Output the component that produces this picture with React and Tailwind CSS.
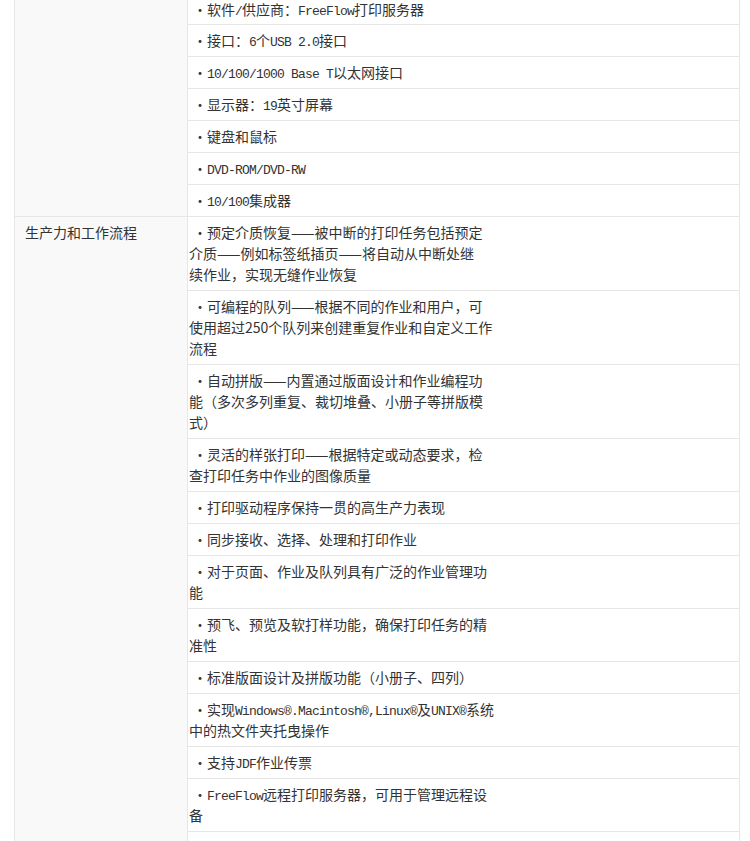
import React from 'react'

const hardware = [
  ['软件/供应商：FreeFlow打印服务器'],
  ['接口：6个USB 2.0接口'],
  ['10/100/1000 Base T以太网接口'],
  ['显示器：19英寸屏幕'],
  ['键盘和鼠标'],
  ['DVD-ROM/DVD-RW'],
  ['10/100集成器'],
]

const workflow = [
  ['预定介质恢复——被中断的打印任务包括预定', '介质——例如标签纸插页——将自动从中断处继', '续作业，实现无缝作业恢复'],
  ['可编程的队列——根据不同的作业和用户，可', '使用超过250个队列来创建重复作业和自定义工作', '流程'],
  ['自动拼版——内置通过版面设计和作业编程功', '能（多次多列重复、裁切堆叠、小册子等拼版模', '式）'],
  ['灵活的样张打印——根据特定或动态要求，检', '查打印任务中作业的图像质量'],
  ['打印驱动程序保持一贯的高生产力表现'],
  ['同步接收、选择、处理和打印作业'],
  ['对于页面、作业及队列具有广泛的作业管理功', '能'],
  ['预飞、预览及软打样功能，确保打印任务的精', '准性'],
  ['标准版面设计及拼版功能（小册子、四列）'],
  ['实现Windows®.Macintosh®,Linux®及UNIX®系统', '中的热文件夹托曳操作'],
  ['支持JDF作业传票'],
  ['FreeFlow远程打印服务器，可用于管理远程设', '备'],
  [],
]

// latin runs look like the old song-ti half width glyphs
function Text({ str }) {
  const parts = str.split(/([\x20-\x7E®]+)/)
  return parts.map((p, i) => {
    if (!p) return null
    if (/^[\x20-\x7E®]+$/.test(p) && p !== '250') {
      return (
        <span key={i} className="font-['Liberation_Mono',monospace] text-[13px] tracking-[-0.8px] whitespace-pre">
          {p}
        </span>
      )
    }
    return <span key={i}>{p}</span>
  })
}

function Item({ lines, first }) {
  // empty row = the next one, below the fold
  if (!lines.length) return <div className="h-[32px]" />
  return (
    <div className={`border-b border-[#e6e6e6] pl-px ${first ? 'pt-[6px] pb-[4px]' : 'py-[5px]'}`}>
      {lines.map((line, i) => (
        <div key={i} className="whitespace-nowrap h-[21px]">
          {i === 0 && <span className="inline-block w-[18px] pl-[4px]">・</span>}
          <Text str={line} />
        </div>
      ))}
    </div>
  )
}

function Section({ label, items, top }) {
  return (
    <div className="flex">
      <div className="w-[173px] shrink-0 bg-[#f9f9f9] border-r border-b border-[#e6e6e6] px-[10px] py-[5px]">
        {label}
      </div>
      <div className="flex-1 flex flex-col">
        {items.map((lines, i) => (
          <Item key={i} lines={lines} first={top && i === 0} />
        ))}
      </div>
    </div>
  )
}

export default function App() {
  return (
    <div className="bg-white min-h-screen pl-[14px] pr-[10px] font-['Noto_Sans_CJK_SC',sans-serif] text-[14px] leading-[21px] text-[#333]">
      <div className="-mt-[7px] border-l border-r border-[#e6e6e6]">
        <Section label="" items={hardware} top />
        <Section label="生产力和工作流程" items={workflow} />
      </div>
    </div>
  )
}
